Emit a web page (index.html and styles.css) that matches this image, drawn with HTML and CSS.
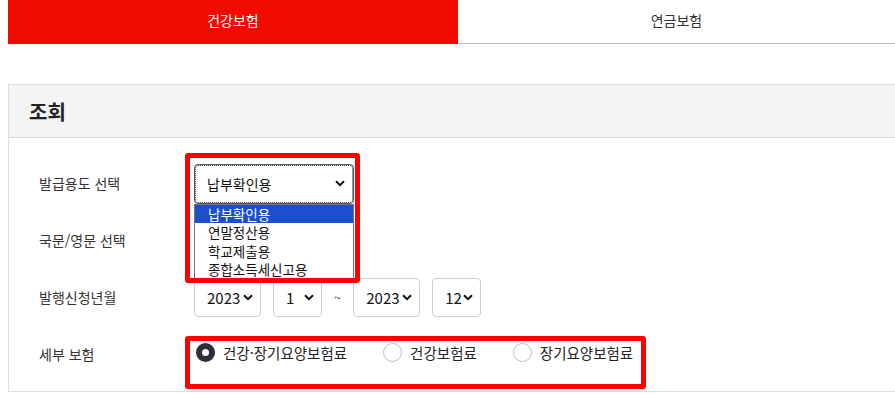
FILE: index.html
```html
<!DOCTYPE html>
<html lang="ko">
  <head>
    <meta charset="UTF-8" />
    <meta name="viewport" content="width=device-width, initial-scale=1.0" />
    <title>보험료 납부확인서</title>
    <link rel="stylesheet" href="styles.css">
  </head>
  <body>
    <div class="tabs">
      <div class="tab active">건강보험</div>
      <div class="tab">연금보험</div>
    </div>

    <div class="panel">
      <div class="panel-head">조회</div>
      <div class="panel-body">
        <div class="row">
          <div class="label">발급용도 선택</div>
          <div class="control">
            <div class="select-wrap">
              <div class="select select-focus wide">
                <span>납부확인용</span>
                <svg class="chev" width="10" height="7" viewBox="0 0 10 7"><path d="M1 1.2 L5 5.2 L9 1.2" fill="none" stroke="#111" stroke-width="2"/></svg>
              </div>
              <ul class="dropdown">
                <li class="selected">납부확인용</li>
                <li>연말정산용</li>
                <li>학교제출용</li>
                <li>종합소득세신고용</li>
              </ul>
            </div>
          </div>
        </div>

        <div class="row">
          <div class="label">국문/영문 선택</div>
          <div class="control"></div>
        </div>

        <div class="row">
          <div class="label">발행신청년월</div>
          <div class="control dates">
            <div class="select year">
              <span>2023</span>
              <svg class="chev" width="10" height="7" viewBox="0 0 10 7"><path d="M1 1.2 L5 5.2 L9 1.2" fill="none" stroke="#111" stroke-width="2"/></svg>
            </div>
            <div class="select month">
              <span>1</span>
              <svg class="chev" width="10" height="7" viewBox="0 0 10 7"><path d="M1 1.2 L5 5.2 L9 1.2" fill="none" stroke="#111" stroke-width="2"/></svg>
            </div>
            <span class="tilde">~</span>
            <div class="select year">
              <span>2023</span>
              <svg class="chev" width="10" height="7" viewBox="0 0 10 7"><path d="M1 1.2 L5 5.2 L9 1.2" fill="none" stroke="#111" stroke-width="2"/></svg>
            </div>
            <div class="select month">
              <span>12</span>
              <svg class="chev" width="10" height="7" viewBox="0 0 10 7"><path d="M1 1.2 L5 5.2 L9 1.2" fill="none" stroke="#111" stroke-width="2"/></svg>
            </div>
          </div>
        </div>

        <div class="row">
          <div class="label">세부 보험</div>
          <div class="control radios">
            <label class="radio"><span class="dot checked"></span>건강·장기요양보험료</label>
            <label class="radio"><span class="dot"></span>건강보험료</label>
            <label class="radio"><span class="dot"></span>장기요양보험료</label>
          </div>
        </div>
      </div>

      <div class="mark mark-purpose"></div>
      <div class="mark mark-detail"></div>
    </div>
  </body>
</html>
```

FILE: styles.css
```css
* {
  box-sizing: border-box;
  margin: 0;
  padding: 0;
  font-family: "Noto Sans CJK KR", "Noto Sans", sans-serif;
}

body {
  margin: 0 0 0 8px;
  background-color: #ffffff;
  color: #222;
  font-size: 14px;
}

.tabs {
  display: flex;
  height: 44px;
}

.tab {
  flex: 1;
  display: flex;
  justify-content: center;
  align-items: center;
  color: #333;
  border-bottom: 1px solid #b8b8c2;
  padding-bottom: 4px;
}

.tab.active {
  flex: 0 0 450px;
  background-color: #f00a00;
  color: #fff;
  border-bottom: none;
}

.panel {
  position: relative;
  margin-top: 40px;
  border: 1px solid #dcdcdf;
  border-right: none;
}

.panel-head {
  height: 53px;
  background-color: #f4f4f4;
  border-bottom: 1px solid #dcdcdc;
  padding-left: 20px;
  display: flex;
  align-items: center;
  font-size: 20px;
  font-weight: bold;
  color: #222;
}

.panel-body {
  padding: 16px 0 9px 30px;
}

.row {
  display: grid;
  grid-template-columns: 155px 1fr;
  align-items: center;
  height: 57px;
}

.label {
  color: #333;
}

.select-wrap {
  position: relative;
  width: 160px;
}

.select {
  display: flex;
  align-items: center;
  justify-content: space-between;
  height: 39px;
  border: 1px solid #cfcfcf;
  border-radius: 4px;
  background: #fff;
  padding: 0 7px 0 12px;
  font-size: 15px;
  color: #111;
}

.select.wide {
  height: 40px;
  font-size: 14px;
  padding: 0 8px 0 12px;
  margin-top: 2px;
}

.select-focus {
  border: 1px solid #555;
  outline: 1px dotted #333;
  outline-offset: -2px;
}

.dropdown {
  position: absolute;
  top: 100%;
  left: 0;
  width: 160px;
  list-style: none;
  background: #fff;
  border: 1px solid #767676;
  z-index: 2;
}

.dropdown li {
  height: 18.5px;
  line-height: 18.5px;
  padding-left: 13px;
  font-size: 13.5px;
  color: #111;
}

.dropdown li.selected {
  background-color: #1c4fce;
  color: #fff;
}

.dates {
  display: flex;
  align-items: center;
  gap: 12px;
  padding-top: 1px;
}

.year {
  width: 67px;
}

.month {
  width: 49px;
  padding-left: 12px;
}

.tilde {
  color: #555;
  font-size: 13px;
}

.radios {
  display: flex;
  align-items: center;
  gap: 36px;
  padding-left: 2px;
  padding-bottom: 2px;
}

.radio {
  display: flex;
  align-items: center;
  gap: 8px;
  color: #222;
  font-size: 14.5px;
}

.dot {
  width: 19px;
  height: 19px;
  border-radius: 50%;
  border: 1px solid #bdbdc2;
  background: #fff;
}

.dot.checked {
  border: 6px solid #2d2e3a;
  background: #fff;
}

.mark {
  position: absolute;
  border: 5px solid #ff0000;
  border-radius: 3px;
  z-index: 3;
}

.mark-purpose {
  left: 176px;
  top: 68px;
  width: 175px;
  height: 130px;
}

.mark-detail {
  left: 176px;
  top: 251px;
  width: 461px;
  height: 53px;
}
```
